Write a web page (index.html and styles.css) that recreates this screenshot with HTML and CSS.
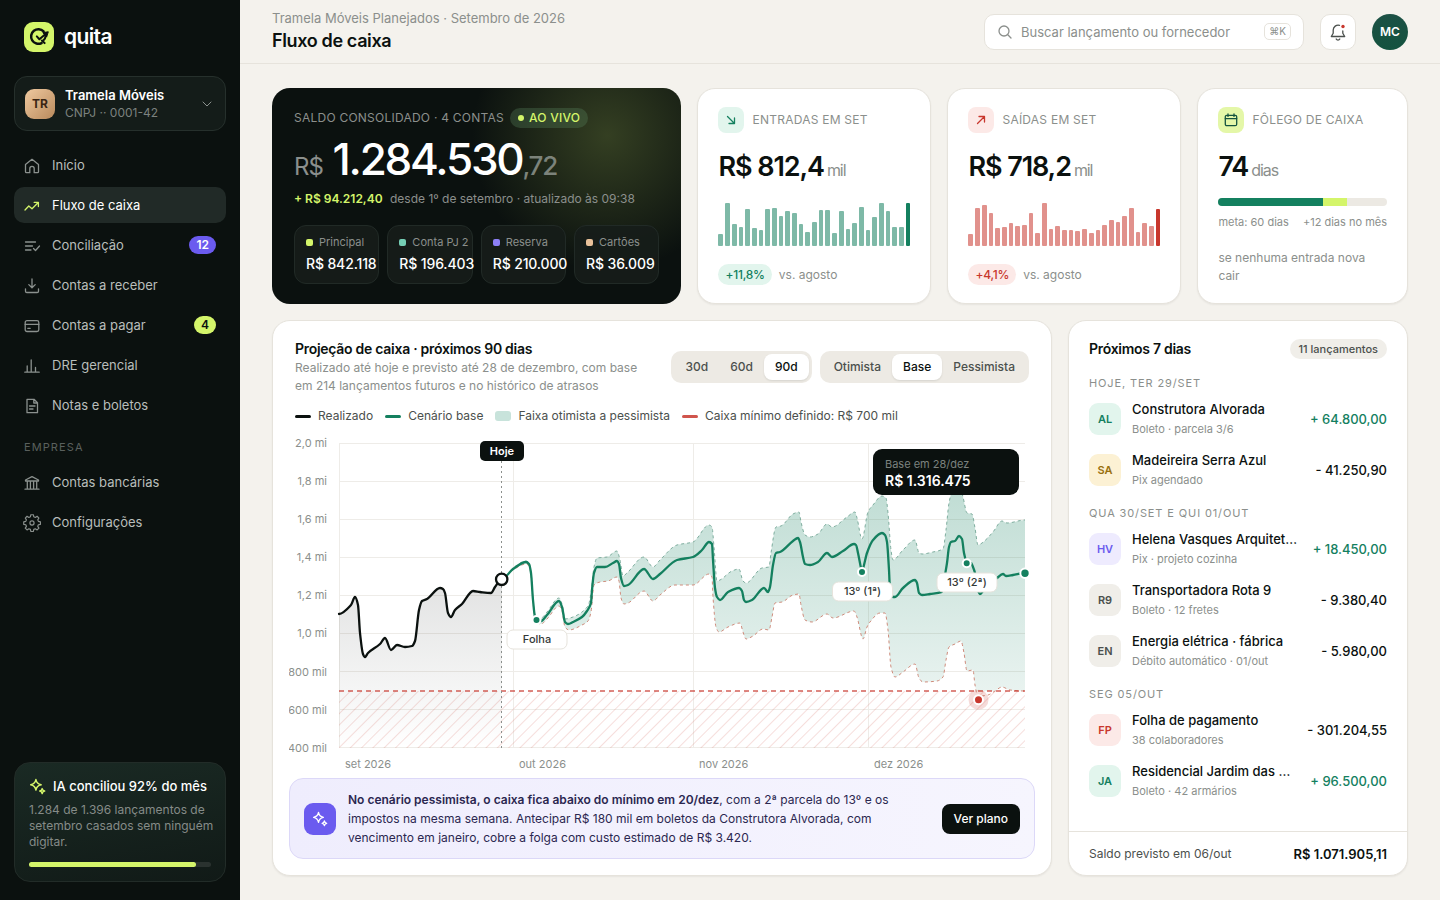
FILE: index.html
```html
<!DOCTYPE html>
<html lang="pt-BR">
<head>
  <meta charset="UTF-8" />
  <meta name="viewport" content="width=device-width, initial-scale=1" />
  <title>quita · Fluxo de caixa</title>
  <link rel="stylesheet" href="styles.css">
</head>
<body>

  <aside class="sidebar">
    <a class="brand" href="#">
      <svg class="brand-mark" viewBox="0 0 30 30" fill="none">
        <rect width="30" height="30" rx="9" fill="#d4f56a"/>
        <path d="M19.600 9.400A7.300 7.300 0 1 0 17.600 21.100" stroke="#0b110f" stroke-width="2.500" stroke-linecap="round"/>
        <path d="M12.800 14.400l2.600 2.800 5.600-4.700" stroke="#0b110f" stroke-width="2" stroke-linecap="round" stroke-linejoin="round"/>
        <path d="M18.800 10.600l5.500-.8-1.700 5.300z" fill="#0b110f" stroke="#0b110f" stroke-linejoin="round"/>
        <path d="M21.600 13.500c0 2.300-1 4-2.600 5.200M17.800 18.600l2.800 2.500" stroke="#0b110f" stroke-width="2" stroke-linecap="round"/>
      </svg>
      <span>quita</span>
    </a>

    <button class="org" type="button">
      <span class="org-badge">TR</span>
      <span class="org-text">
        <strong>Tramela Móveis</strong>
        <small>CNPJ ·· 0001-42</small>
      </span>
      <svg class="chevron" viewBox="0 0 12 12"><path d="M2 4l4 4 4-4"/></svg>
    </button>

    <nav class="nav">
      <a href="#">
        <svg viewBox="0 0 18 18"><path d="M2.500 7.600L9 2.300l6.500 5.300v7.100a1 1 0 0 1-1 1h-3.300v-4.200a2.200 2.200 0 0 0-4.400 0v4.200H3.500a1 1 0 0 1-1-1z"/></svg>
        <span>Início</span>
      </a>
      <a class="active" href="#">
        <svg viewBox="0 0 18 18"><path d="M2 13l3.800-4 3.200 2.800L15 5.800M11.200 5.400h4.200v4.200"/></svg>
        <span>Fluxo de caixa</span>
      </a>
      <a href="#">
        <svg viewBox="0 0 18 18"><path d="M2.500 5h10M2.500 9h7M2.500 13h5.500M10.500 11.500l2 2L16.500 9"/></svg>
        <span>Conciliação</span>
        <em class="count purple">12</em>
      </a>
      <a href="#">
        <svg viewBox="0 0 18 18"><path d="M9 2v8.500M5.800 7.600L9 10.800l3.200-3.200M2.500 11.800v2.400a1.300 1.300 0 0 0 1.300 1.300h10.400a1.300 1.300 0 0 0 1.300-1.300v-2.400"/></svg>
        <span>Contas a receber</span>
      </a>
      <a href="#">
        <svg viewBox="0 0 18 18"><rect x="2.200" y="3.700" width="13.600" height="10.800" rx="1.800"/><path d="M2.200 7.400h13.600M4.800 11.300h2.400"/></svg>
        <span>Contas a pagar</span>
        <em class="count lime">4</em>
      </a>
      <a href="#">
        <svg viewBox="0 0 18 18"><path d="M1.800 15.200h14.400M4.200 15V9M8.200 15V3M12.500 15v-4.500"/></svg>
        <span>DRE gerencial</span>
      </a>
      <a href="#">
        <svg viewBox="0 0 18 18"><path d="M4 2.300h7l3.500 3.500v9.900H4zM10.800 2.300v3.700h3.700M6.500 9h5.500M6.500 12h3.500"/></svg>
        <span>Notas e boletos</span>
      </a>
      <h2>Empresa</h2>
      <a href="#">
        <svg viewBox="0 0 18 18"><path d="M2.500 6L9 2.600 15.500 6v1h-13zM4.300 7.200v7M7.400 7.200v7M10.600 7.200v7M13.700 7.200v7M2 15.200h14"/></svg>
        <span>Contas bancárias</span>
      </a>
      <a href="#">
        <svg class="gear" viewBox="0 0 20 20"><circle cx="10" cy="10" r="2.300"/><path d="M8.600 1.700h2.800l.5 2.300 1.700.7 2-1.300 2 2-1.300 2 .7 1.700 2.300.5v2.800l-2.300.5-.7 1.700 1.300 2-2 2-2-1.300-1.700.7-.5 2.300H8.600l-.5-2.300-1.700-.7-2 1.300-2-2 1.300-2-.7-1.700-2.300-.5V9.600L3 9.100l.7-1.700-1.300-2 2-2 2 1.300 1.700-.7z" transform="translate(.1 -.9)"/></svg>
        <span>Configurações</span>
      </a>
    </nav>

    <div class="ai-card">
      <h3>
        <svg viewBox="0 0 16 16"><path d="M6.500 1.500c.6 3 1.900 4.300 4.900 4.900-3 .6-4.300 1.900-4.900 4.900-.6-3-1.900-4.300-4.900-4.900 3-.6 4.300-1.900 4.900-4.900zM12.400 10c.3 1.500.8 2 2.300 2.300-1.500.3-2 .8-2.300 2.300-.3-1.500-.8-2-2.300-2.300 1.500-.3 2-.8 2.300-2.300z"/></svg>
        IA conciliou 92% do mês
      </h3>
      <p>1.284 de 1.396 lançamentos de setembro casados sem ninguém digitar.</p>
      <div class="meter"><i style="width: 92%"></i></div>
    </div>
  </aside>

  <div class="page">
    <header class="topbar">
      <div class="titles">
        <p>Tramela Móveis Planejados · Setembro de 2026</p>
        <h1>Fluxo de caixa</h1>
      </div>
      <label class="search">
        <svg viewBox="0 0 16 16"><circle cx="7" cy="7" r="5"/><path d="M10.800 10.800L14 14"/></svg>
        <input type="search" placeholder="Buscar lançamento ou fornecedor" aria-label="Buscar lançamento ou fornecedor">
        <kbd>⌘K</kbd>
      </label>
      <button class="bell" type="button" aria-label="Notificações">
        <svg viewBox="0 0 18 18"><path d="M10.500 2.300A5 5 0 0 0 4.200 7v3.200L2.300 13.500h13.400l-1.900-3.300V8M7.200 16a2 2 0 0 0 3.600 0"/><circle cx="14" cy="3.500" r="1.700"/></svg>
      </button>
      <button class="avatar" type="button">MC</button>
    </header>

    <main class="content">
      <section class="kpis">
        <article class="hero">
          <div class="hero-label">Saldo consolidado · 4 contas <span class="live">Ao vivo</span></div>
          <div class="hero-value"><small>R$</small> 1.284.530<small class="cents">,72</small></div>
          <p class="hero-note"><b>+ R$ 94.212,40</b> desde 1º de setembro · atualizado às 09:38</p>
          <ul class="accounts">
            <li class="acc-lime"><span>Principal</span><b>R$ 842.118</b></li>
            <li class="acc-teal"><span>Conta PJ 2</span><b>R$ 196.403</b></li>
            <li class="acc-violet"><span>Reserva</span><b>R$ 210.000</b></li>
            <li class="acc-peach"><span>Cartões</span><b>R$ 36.009</b></li>
          </ul>
        </article>

        <article class="card kpi green">
          <header>
            <span class="kpi-icon"><svg viewBox="0 0 14 14"><path d="M3.500 3.500l7 7M10.500 5v5.500H5"/></svg></span>
            <h2>Entradas em set</h2>
          </header>
          <div class="kpi-value">R$ 812,4<small>mil</small></div>
          <div class="bars" data-bars="12,43,22,19,37,18,16,37,38,30,35,33,22,14,24,36,36,13,35,17,23,39,16,29,43,35,19,19,43"></div>
          <footer><span class="chip">+11,8%</span>vs. agosto</footer>
        </article>

        <article class="card kpi red">
          <header>
            <span class="kpi-icon"><svg viewBox="0 0 14 14"><path d="M3.500 10.500l7-7M5 3.500h5.500V9"/></svg></span>
            <h2>Saídas em set</h2>
          </header>
          <div class="kpi-value">R$ 718,2<small>mil</small></div>
          <div class="bars" data-bars="12,38,41,33,18,19,23,20,21,33,13,43,17,20,16,16,15,17,13,16,21,26,24,30,38,14,23,20,37"></div>
          <footer><span class="chip">+4,1%</span>vs. agosto</footer>
        </article>

        <article class="card kpi lime">
          <header>
            <span class="kpi-icon"><svg viewBox="0 0 14 14"><rect x="1.300" y="2.300" width="11.400" height="10.400" rx="1.500"/><path d="M1.300 5.600h11.400M4 1v2.400M10 1v2.400"/></svg></span>
            <h2>Fôlego de caixa</h2>
          </header>
          <div class="kpi-value">74<small>dias</small></div>
          <div class="runway"><i class="goal" style="width: 62%"></i><i class="extra" style="width: 14%"></i></div>
          <div class="runway-text"><span>meta: 60 dias</span><span>+12 dias no mês</span></div>
          <footer>se nenhuma entrada nova cair</footer>
        </article>
      </section>

      <section class="panels">
        <article class="card projection">
          <header class="proj-head">
            <div>
              <h2>Projeção de caixa · próximos 90 dias</h2>
              <p>Realizado até hoje e previsto até 28 de dezembro, com base em 214 lançamentos futuros e no histórico de atrasos</p>
            </div>
            <div class="segment">
              <button type="button">30d</button>
              <button type="button">60d</button>
              <button type="button" class="on">90d</button>
            </div>
            <div class="segment">
              <button type="button">Otimista</button>
              <button type="button" class="on">Base</button>
              <button type="button">Pessimista</button>
            </div>
          </header>

          <ul class="legend">
            <li><i class="line-ink"></i>Realizado</li>
            <li><i class="line-green"></i>Cenário base</li>
            <li><i class="area"></i>Faixa otimista a pessimista</li>
            <li><i class="line-red"></i>Caixa mínimo definido: R$ 700 mil</li>
          </ul>

          <svg class="chart" viewBox="289 429 746 349" role="img" aria-label="Projeção de caixa">
            <defs>
              <linearGradient id="band" x1="0" y1="0" x2="0" y2="1">
                <stop offset="0" stop-color="#14805f" stop-opacity=".27"/>
                <stop offset="1" stop-color="#14805f" stop-opacity=".09"/>
              </linearGradient>
              <linearGradient id="past" x1="0" y1="0" x2="0" y2="1">
                <stop offset="0" stop-color="#0b110f" stop-opacity=".12"/>
                <stop offset="1" stop-color="#0b110f" stop-opacity="0"/>
              </linearGradient>
              <pattern id="hatch" width="8" height="8" patternUnits="userSpaceOnUse" patternTransform="rotate(45)">
                <path d="M0 0v8" stroke="#c8372d" stroke-width="1.400" stroke-opacity=".24"/>
              </pattern>
              <clipPath id="above"><rect x="339" y="443" width="686" height="248"/></clipPath>
            </defs>

            <path class="grid" d="M339 443.500H1025M339 481.500H1025M339 519.500H1025M339 557.500H1025M339 595.500H1025M339 633.500H1025M339 671.500H1025M339 709.500H1025M339 747.500H1025M339.500 443V748M513.500 443V748M693.500 443V748M868.500 443V748"/>
            <g class="axis y-axis">
              <text x="327" y="447">2,0 mi</text>
              <text x="327" y="485">1,8 mi</text>
              <text x="327" y="523">1,6 mi</text>
              <text x="327" y="561">1,4 mi</text>
              <text x="327" y="599">1,2 mi</text>
              <text x="327" y="637">1,0 mi</text>
              <text x="327" y="676">800 mil</text>
              <text x="327" y="714">600 mil</text>
              <text x="327" y="752">400 mil</text>
            </g>
            <g class="axis">
              <text x="345" y="768">set 2026</text>
              <text x="519" y="768">out 2026</text>
              <text x="699" y="768">nov 2026</text>
              <text x="874" y="768">dez 2026</text>
            </g>

            <rect x="339" y="691" width="686" height="57" fill="url(#hatch)"/>
            <path id="past-area" fill="url(#past)"/>
            <path id="band-area" fill="url(#band)" clip-path="url(#above)"/>
            <path id="upper" class="dash upper"/>
            <path id="lower" class="dash lower"/>
            <path class="minimum" d="M339 691H1025"/>
            <path class="today" d="M501.500 461V748"/>
            <path id="base" class="serie base"/>
            <path id="real" class="serie real"/>

            <circle cx="501.700" cy="579.300" r="5.700" fill="#fff" stroke="#0b110f" stroke-width="2.300"/>
            <g class="dots">
              <circle cx="536.500" cy="620" r="4"/>
              <circle cx="862" cy="572" r="4"/>
              <circle cx="966.700" cy="563.300" r="4"/>
              <circle cx="1025" cy="573.300" r="4.700"/>
            </g>
            <circle cx="978.500" cy="699.700" r="10" fill="#c8372d" fill-opacity=".18"/>
            <circle class="alert-dot" cx="978.500" cy="699.700" r="4.500"/>

            <g class="tag">
              <rect x="507" y="630" width="60" height="19" rx="6"/>
              <text x="537" y="643">Folha</text>
              <rect x="832.500" y="582" width="60" height="19" rx="6"/>
              <text x="862.500" y="595">13º (1ª)</text>
              <rect x="937" y="573" width="60" height="19" rx="6"/>
              <text x="967" y="586">13º (2ª)</text>
            </g>
            <g class="tag-dark">
              <rect x="480" y="441" width="44" height="20" rx="5"/>
              <text x="502" y="455" text-anchor="middle">Hoje</text>
              <rect x="873" y="449" width="146" height="46" rx="9"/>
              <text class="tip-label" x="885" y="468">Base em 28/dez</text>
              <text class="tip-value" x="885" y="486">R$ 1.316.475</text>
            </g>
          </svg>

          <div class="advice">
            <span class="advice-icon">
              <svg viewBox="0 0 16 16"><path d="M6.500 1.500c.6 3 1.900 4.300 4.900 4.900-3 .6-4.300 1.900-4.900 4.900-.6-3-1.900-4.300-4.900-4.900 3-.6 4.300-1.900 4.900-4.900zM12.400 10c.3 1.500.8 2 2.300 2.300-1.500.3-2 .8-2.300 2.300-.3-1.500-.8-2-2.300-2.300 1.500-.3 2-.8 2.300-2.300z"/></svg>
            </span>
            <p><b>No cenário pessimista, o caixa fica abaixo do mínimo em 20/dez</b>, com a 2ª parcela do 13º e os impostos na mesma semana. Antecipar R$ 180 mil em boletos da Construtora Alvorada, com vencimento em janeiro, cobre a folga com custo estimado de R$ 3.420.</p>
            <button type="button">Ver plano</button>
          </div>
        </article>

        <article class="card upcoming">
          <header>
            <h2>Próximos 7 dias</h2>
            <span class="pill">11 lançamentos</span>
          </header>

          <h3>Hoje, ter 29/set</h3>
          <ul>
            <li><i class="tone-green">AL</i><div><b>Construtora Alvorada</b><small>Boleto · parcela 3/6</small></div><span class="in">+ 64.800,00</span></li>
            <li><i class="tone-yellow">SA</i><div><b>Madeireira Serra Azul</b><small>Pix agendado</small></div><span>- 41.250,90</span></li>
          </ul>
          <h3>Qua 30/set e qui 01/out</h3>
          <ul>
            <li><i class="tone-violet">HV</i><div><b>Helena Vasques Arquitetura</b><small>Pix · projeto cozinha</small></div><span class="in">+ 18.450,00</span></li>
            <li><i>R9</i><div><b>Transportadora Rota 9</b><small>Boleto · 12 fretes</small></div><span>- 9.380,40</span></li>
            <li><i>EN</i><div><b>Energia elétrica · fábrica</b><small>Débito automático · 01/out</small></div><span>- 5.980,00</span></li>
          </ul>
          <h3>Seg 05/out</h3>
          <ul>
            <li><i class="tone-red">FP</i><div><b>Folha de pagamento</b><small>38 colaboradores</small></div><span>- 301.204,55</span></li>
            <li><i class="tone-green">JA</i><div><b>Residencial Jardim das Acácias</b><small>Boleto · 42 armários</small></div><span class="in">+ 96.500,00</span></li>
          </ul>

          <footer><span>Saldo previsto em 06/out</span><b>R$ 1.071.905,11</b></footer>
        </article>
      </section>
    </main>
  </div>

  <script src="script.js"></script>
</body>
</html>
```
FILE: styles.css
```css
* {
  margin: 0;
  padding: 0;
  box-sizing: border-box;
}

:root {
  --ink: #0b110f;
  --text: #4b504d;
  --muted: #8b8f8c;
  --line: #e6e3dc;
  --green: #14805f;
  --lime: #d4f56a;
  --red: #c8372d;
  --violet: #6b5bef;
}

body {
  display: flex;
  min-height: 100vh;
  font-family: Inter, "Liberation Sans", sans-serif;
  font-size: 13px;
  line-height: 18px;
  color: var(--ink);
  background: #f4f2ed;
}

button,
input {
  font: inherit;
  color: inherit;
  border: none;
  background: none;
}

button {
  cursor: pointer;
}

ul {
  list-style: none;
}

a {
  color: inherit;
  text-decoration: none;
}

svg {
  fill: none;
}

/* Sidebar */
.sidebar {
  flex: 0 0 240px;
  display: flex;
  flex-direction: column;
  padding: 22px 14px 18px;
  background: var(--ink);
  color: #b9bebb;
}

.brand {
  display: flex;
  align-items: center;
  gap: 10px;
  padding: 0 10px;
  font-size: 21px;
  font-weight: 600;
  letter-spacing: -0.03em;
  color: #fff;
}

.brand-mark {
  width: 30px;
  height: 30px;
}

.org {
  display: flex;
  align-items: center;
  gap: 10px;
  margin-top: 24px;
  padding: 9px 12px 9px 10px;
  text-align: left;
  border: 1px solid #26302c;
  border-radius: 13px;
  background: #141c19;
}

.org-badge {
  width: 30px;
  height: 30px;
  border-radius: 9px;
  background: linear-gradient(135deg, #efc9a0, #b98a5c);
  color: #3a2513;
  font-size: 12px;
  font-weight: 700;
  line-height: 30px;
  text-align: center;
}

.org-text {
  flex: 1;
}

.org-text strong,
.org-text small {
  display: block;
}

.org-text strong {
  font-size: 13px;
  font-weight: 600;
  color: #fff;
}

.org-text small {
  font-size: 12px;
  line-height: 17px;
  color: #7c827f;
}

.chevron {
  width: 12px;
  height: 12px;
  stroke: #8b918e;
  stroke-linecap: round;
}

.nav {
  display: flex;
  flex-direction: column;
  gap: 4px;
  margin-top: 16px;
}

.nav a {
  display: flex;
  align-items: center;
  gap: 11px;
  padding: 8px 10px 8px 9px;
  border-radius: 10px;
  font-size: 13px;
  line-height: 20px;
}

.nav svg {
  width: 18px;
  height: 18px;
  margin-bottom: -2px;
  stroke: #8b918e;
  stroke-width: 1.3;
  stroke-linecap: round;
  stroke-linejoin: round;
}

.nav a span {
  flex: 1;
}

.nav .active {
  background: #212a27;
  color: #fff;
}

.nav .active svg {
  stroke: var(--lime);
}

.nav h2 {
  margin: 12px 10px 5px;
  font-size: 11px;
  font-weight: 400;
  line-height: 16px;
  letter-spacing: 0.1em;
  text-transform: uppercase;
  color: #5a605d;
}

.count {
  padding: 0 7px;
  border-radius: 9px;
  font-size: 12px;
  font-style: normal;
  font-weight: 600;
  line-height: 18px;
}

.count.purple {
  background: var(--violet);
  color: #fff;
}

.count.lime {
  background: var(--lime);
  color: var(--ink);
}

.ai-card {
  margin-top: auto;
  padding: 14px;
  border: 1px solid #222c28;
  border-radius: 16px;
  background: linear-gradient(170deg, #1a2a24, #111a17);
}

.ai-card h3 {
  display: flex;
  align-items: center;
  gap: 7px;
  font-size: 13px;
  font-weight: 500;
  color: #fff;
}

.ai-card svg {
  width: 17px;
  height: 17px;
  stroke: var(--lime);
  stroke-width: 1.4;
  stroke-linejoin: round;
}

.ai-card p {
  margin: 7px -8px 12px 0;
  font-size: 12px;
  line-height: 16px;
  color: #858b88;
}

.meter {
  height: 5px;
  border-radius: 3px;
  background: #2a322f;
}

.meter i {
  display: block;
  height: 100%;
  border-radius: 3px;
  background: var(--lime);
}

/* Top bar */
.page {
  flex: 1;
  min-width: 0;
  display: flex;
  flex-direction: column;
}

.topbar {
  display: flex;
  align-items: center;
  gap: 16px;
  height: 64px;
  padding: 0 32px;
  border-bottom: 1px solid var(--line);
}

.titles {
  flex: 1;
}

.titles p {
  color: var(--muted);
}

.titles h1 {
  font-size: 18px;
  font-weight: 600;
  line-height: 28px;
  letter-spacing: -0.02em;
}

.search {
  display: flex;
  align-items: center;
  gap: 8px;
  width: 320px;
  height: 36px;
  padding: 0 12px;
  border: 1px solid var(--line);
  border-radius: 10px;
  background: #fff;
}

.search svg {
  width: 16px;
  height: 16px;
  stroke: var(--muted);
  stroke-width: 1.3;
  stroke-linecap: round;
}

.search input {
  flex: 1;
  min-width: 0;
  outline: none;
}

.search input::placeholder {
  color: var(--muted);
  opacity: 1;
}

.search kbd {
  padding: 0 4px;
  border: 1px solid var(--line);
  border-radius: 5px;
  font-family: inherit;
  font-size: 10px;
  line-height: 15px;
  color: var(--muted);
}

.bell {
  width: 36px;
  height: 36px;
  padding-top: 4px;
  border: 1px solid var(--line);
  border-radius: 10px;
  background: #fff;
}

.bell svg {
  width: 18px;
  height: 18px;
  stroke: var(--text);
  stroke-width: 1.3;
  stroke-linecap: round;
  stroke-linejoin: round;
}

.bell circle {
  fill: var(--red);
  stroke: none;
}

.avatar {
  width: 36px;
  height: 36px;
  border-radius: 50%;
  background: linear-gradient(#1c5145, #14533f);
  color: #fff;
  font-size: 12px;
  font-weight: 600;
}

/* KPI row */
.content {
  flex: 1;
  display: flex;
  flex-direction: column;
  gap: 16px;
  padding: 24px 32px;
}

.kpis {
  display: grid;
  grid-template-columns: 1.75fr 1fr 1fr 0.9fr;
  gap: 16px;
}

.card {
  border: 1px solid var(--line);
  border-radius: 18px;
  background: #fff;
  box-shadow: 0 1px 2px rgba(11, 17, 15, 0.06);
}

.hero {
  min-width: 0;
  padding: 20px 22px;
  border-radius: 18px;
  background: radial-gradient(circle at 82% 22%, #343f22, rgba(11, 17, 15, 0) 36%) var(--ink);
  color: #fff;
}

.hero-label {
  display: flex;
  align-items: center;
  gap: 6px;
  font-size: 12px;
  line-height: 20px;
  letter-spacing: 0.02em;
  text-transform: uppercase;
  white-space: nowrap;
  color: var(--muted);
}

.live {
  display: flex;
  align-items: center;
  gap: 5px;
  padding: 0 8px;
  border-radius: 10px;
  background: rgba(93, 139, 100, 0.3);
  color: var(--lime);
  font-weight: 500;
}

.live::before {
  content: "";
  width: 6px;
  height: 6px;
  border-radius: 50%;
  background: currentColor;
}

.hero-value {
  margin-top: 6px;
  font-size: 44px;
  font-weight: 500;
  line-height: 50px;
  letter-spacing: -0.05em;
  white-space: nowrap;
}

.hero-value small {
  font-size: 24px;
  font-weight: 400;
  line-height: 24px;
  letter-spacing: -0.04em;
  color: var(--muted);
}

.hero-value .cents {
  font-size: 26px;
  font-weight: 500;
  letter-spacing: -0.05em;
  color: #7c837b;
}

.hero-note {
  margin-top: 6px;
  font-size: 12px;
  white-space: nowrap;
  color: var(--muted);
}

.hero-note b {
  margin-right: 4px;
  font-weight: 600;
  color: var(--lime);
}

.accounts {
  display: grid;
  grid-template-columns: repeat(4, minmax(0, 1fr));
  gap: 8px;
  margin-top: 17px;
}

.accounts li {
  padding: 7px 11px 8px;
  border: 1px solid #212a26;
  border-radius: 12px;
  background: rgba(22, 29, 26, 0.9);
  white-space: nowrap;
}

.accounts span {
  display: flex;
  align-items: center;
  gap: 6px;
  font-size: 11px;
  color: var(--muted);
}

.accounts span::before {
  content: "";
  flex: none;
  width: 7px;
  height: 7px;
  border-radius: 2px;
  background: var(--dot);
}

.accounts b {
  display: block;
  margin-top: 2px;
  font-size: 14px;
  font-weight: 500;
  line-height: 22px;
  letter-spacing: -0.01em;
}

.acc-lime { --dot: #d4f56a; }
.acc-teal { --dot: #74cdb4; }
.acc-violet { --dot: #8c7ff5; }
.acc-peach { --dot: #e8c19a; }

.kpi {
  display: flex;
  flex-direction: column;
  padding: 18px 20px;
}

.kpi.green {
  --tone: #14805f;
  --tint: #e2f5ed;
}

.kpi.red {
  --tone: #c8372d;
  --tint: #fce9e7;
}

.kpi.lime {
  --tone: #14533f;
  --tint: #e4f7a8;
}

.kpi header {
  display: flex;
  align-items: center;
  gap: 8px;
}

.kpi-icon {
  display: grid;
  place-items: center;
  width: 26px;
  height: 26px;
  border-radius: 8px;
  background: var(--tint);
}

.kpi-icon svg {
  width: 14px;
  height: 14px;
  stroke: var(--tone);
  stroke-width: 1.3;
  stroke-linecap: round;
  stroke-linejoin: round;
}

.kpi h2 {
  font-size: 12px;
  font-weight: 400;
  letter-spacing: 0.02em;
  text-transform: uppercase;
  white-space: nowrap;
  color: var(--muted);
}

.kpi-value {
  margin-top: 16px;
  font-size: 27px;
  font-weight: 600;
  line-height: 36px;
  letter-spacing: -0.04em;
}

.kpi-value small {
  margin-left: 3px;
  font-size: 16px;
  font-weight: 400;
  line-height: 16px;
  color: var(--muted);
}

.bars {
  display: flex;
  align-items: flex-end;
  gap: 2px;
  height: 44px;
  margin-top: 17px;
}

.bars i {
  flex: 1;
  border-radius: 1px;
  background: var(--tone);
  opacity: 0.55;
}

.bars i:last-child {
  opacity: 1;
}

.kpi footer {
  display: flex;
  align-items: center;
  gap: 7px;
  margin-top: auto;
  font-size: 12px;
  color: var(--muted);
}

.chip {
  padding: 0 7px;
  border-radius: 11px;
  background: var(--tint);
  color: var(--tone);
  font-size: 12px;
  font-weight: 500;
  line-height: 21px;
  letter-spacing: -0.02em;
}

.runway {
  display: flex;
  height: 8px;
  margin-top: 13px;
  border-radius: 4px;
  overflow: hidden;
  background: #ece9e3;
}

.goal {
  background: var(--green);
}

.extra {
  background: var(--lime);
}

.runway-text {
  display: flex;
  justify-content: space-between;
  margin-top: 8px;
  font-size: 11px;
  line-height: 16px;
  white-space: nowrap;
  color: var(--muted);
}

/* Panels */
.panels {
  flex: 1;
  display: grid;
  grid-template-columns: minmax(0, 1fr) 340px;
  gap: 16px;
}

.panels h2 {
  font-size: 14px;
  font-weight: 600;
  line-height: 20px;
  letter-spacing: -0.02em;
}

.projection {
  padding: 18px 16px 16px;
}

.proj-head {
  display: flex;
  align-items: center;
  gap: 8px;
  padding: 0 6px;
}

.proj-head > div:first-child {
  flex: 1;
}

.proj-head p {
  max-width: 360px;
  font-size: 12px;
  color: var(--muted);
}

.segment {
  display: flex;
  padding: 3px;
  border-radius: 10px;
  background: #edeae4;
}

.segment button {
  padding: 0 11px;
  border-radius: 8px;
  font-size: 12px;
  font-weight: 500;
  line-height: 26px;
  color: var(--text);
}

.segment .on {
  background: #fff;
  color: var(--ink);
  box-shadow: 0 1px 2px rgba(11, 17, 15, 0.1);
}

.legend {
  display: flex;
  gap: 12px;
  margin-top: 12px;
  padding: 0 6px;
  font-size: 12px;
  color: var(--text);
}

.legend li {
  display: flex;
  align-items: center;
  gap: 7px;
}

.legend i {
  width: 16px;
  height: 3px;
  border-radius: 2px;
}

.line-ink { background: var(--ink); }
.line-green { background: var(--green); }
.line-red { background: var(--red); opacity: 0.85; }

.legend .area {
  height: 10px;
  border-radius: 3px;
  background: #c8e3db;
}

.chart {
  display: block;
  width: 100%;
  margin-top: 4px;
}

.grid {
  stroke: #eeece8;
}

.axis text {
  font-size: 11px;
  fill: var(--muted);
}

.y-axis text {
  text-anchor: end;
}

.serie {
  stroke-width: 2.3;
  stroke-linecap: round;
  stroke-linejoin: round;
}

.real { stroke: var(--ink); }
.base { stroke: var(--green); }

.dash {
  stroke-dasharray: 3 3;
}

.upper { stroke: #7fae9f; }
.lower { stroke: #cf8c7c; }

.minimum {
  stroke: var(--red);
  stroke-width: 1.5;
  stroke-dasharray: 5 4;
  opacity: 0.8;
}

.today {
  stroke: #8b8f8c;
  stroke-dasharray: 2 3;
}

.dots circle {
  fill: var(--green);
  stroke: #fff;
  stroke-width: 2;
}

.alert-dot {
  fill: var(--red);
  stroke: #fff;
  stroke-width: 2;
}

.tag rect {
  fill: #fff;
  stroke: #e6e3dc;
}

.tag text {
  font-size: 11px;
  font-weight: 500;
  text-anchor: middle;
  fill: #333836;
}

.tag-dark rect {
  fill: var(--ink);
}

.tag-dark text {
  font-size: 11px;
  font-weight: 600;
  fill: #fff;
}

.tag-dark .tip-label {
  font-weight: 400;
  fill: #7c827f;
}

.tag-dark .tip-value {
  font-size: 14px;
}

.advice {
  display: flex;
  align-items: center;
  gap: 12px;
  padding: 11px 14px;
  border: 1px solid #dcd8f8;
  border-radius: 14px;
  background: linear-gradient(90deg, #efedfd, #f6f5fe);
}

.advice-icon {
  flex: none;
  display: grid;
  place-items: center;
  width: 32px;
  height: 32px;
  border-radius: 9px;
  background: var(--violet);
}

.advice svg {
  width: 16px;
  height: 16px;
  stroke: #fff;
  stroke-width: 1.3;
  stroke-linejoin: round;
}

.advice p {
  flex: 1;
  font-size: 12px;
  line-height: 19px;
  color: #2b2750;
}

.advice b {
  font-weight: 600;
}

.advice button {
  padding: 0 12px;
  border-radius: 8px;
  background: var(--ink);
  color: #fff;
  font-size: 12px;
  font-weight: 500;
  line-height: 30px;
  white-space: nowrap;
}

.upcoming {
  display: flex;
  flex-direction: column;
  padding-top: 18px;
}

.upcoming header,
.upcoming footer {
  display: flex;
  align-items: center;
  justify-content: space-between;
  padding: 0 20px;
}

.pill {
  padding: 0 9px;
  border-radius: 10px;
  background: #f0eee9;
  font-size: 11px;
  font-weight: 500;
  line-height: 20px;
  color: var(--text);
}

.upcoming h3 {
  padding: 11px 20px 2px;
  font-size: 11px;
  font-weight: 400;
  line-height: 15px;
  letter-spacing: 0.08em;
  text-transform: uppercase;
  color: var(--muted);
}

.upcoming header + h3 {
  padding-top: 17px;
}

.upcoming li {
  display: flex;
  align-items: center;
  gap: 11px;
  height: 51px;
  padding: 0 20px;
}

.upcoming li i {
  flex: none;
  width: 32px;
  border-radius: 9px;
  background: #f0eee9;
  color: var(--text);
  font-size: 11px;
  font-style: normal;
  font-weight: 600;
  line-height: 32px;
  text-align: center;
}

.upcoming li .tone-green { background: #e2f5ed; color: var(--green); }
.upcoming li .tone-yellow { background: #fcf1d4; color: #99700f; }
.upcoming li .tone-violet { background: #eeebfe; color: var(--violet); }
.upcoming li .tone-red { background: #fce9e7; color: var(--red); }

.upcoming li div {
  flex: 1;
  min-width: 0;
}

.upcoming li b,
.upcoming li small {
  display: block;
}

.upcoming li b {
  overflow: hidden;
  text-overflow: ellipsis;
  white-space: nowrap;
  font-weight: 500;
  line-height: 20px;
}

.upcoming li small {
  font-size: 11px;
  line-height: 20px;
  color: var(--muted);
}

.upcoming li span {
  font-weight: 500;
  white-space: nowrap;
}

.upcoming li .in {
  color: var(--green);
}

.upcoming footer {
  margin-top: auto;
  height: 44px;
  border-top: 1px solid var(--line);
  font-size: 12px;
  color: var(--text);
}

.upcoming footer b {
  font-size: 13px;
  font-weight: 600;
  color: var(--ink);
}
```
FILE: script.js
```js
// Mini bar charts
document.querySelectorAll(".bars").forEach(box => {
  box.dataset.bars.split(",").forEach(h => {
    const bar = document.createElement("i");
    bar.style.height = h + "px";
    box.appendChild(bar);
  });
});

// Chart series, x and y in the units of the viewBox
const series = {
  real: "339,614 351,605 355,597 358,605 360,633 363,654 365,657 368,653 380,644 385,638 391,650 397,645 405,647 412,646 415,641 419,610 422,601 427,599 440,588 443,589 445,593 448,613 451,617 455,610 462,604 473,591 480,592 491,593 495,587 502,579",
  base: "502,579 513,569 526,562 529,564 531,573 533,600 535,617 537,620 541,621 547,615 559,601 562,607 565,622 568,624 573,622 582,617 587,611 591,603 592,590 594,573 597,567 605,567 613,563 617,561 619,564 621,578 624,586 628,585 644,569 653,579 660,574 677,560 693,557 702,550 709,542 712,544 713,560 715,588 717,597 720,600 728,592 739,588 742,591 744,600 746,602 752,600 764,588 768,592 770,587 773,565 776,553 780,552 793,541 798,538 800,542 803,557 805,564 810,565 818,562 827,553 832,557 843,551 854,544 856,545 858,553 861,568 862,572 864,565 867,553 873,540 882,533 885,535 887,542 889,570 890,590 893,597 895,597 903,588 915,580 917,583 919,593 922,595 930,594 942,592 945,575 947,563 949,547 951,542 955,541 959,536 962,539 964,553 967,563 971,563 973,567 975,573 977,588 980,594 983,591 990,584 997,578 1003,574 1006,576 1013,575 1025,573",
  upper: "502,579 513,568 526,561 529,563 531,572 533,599 535,615 537,618 541,618 547,612 559,598 562,604 565,619 573,617 588,606 591,593 594,567 597,558 607,557 617,551 620,560 623,576 627,573 644,557 653,567 660,560 677,545 693,542 709,525 712,527 714,547 717,581 720,580 732,571 739,569 743,581 746,583 762,568 769,567 771,553 776,527 781,526 793,514 799,512 801,522 805,535 810,537 818,534 827,524 832,527 847,517 855,512 857,518 862,539 868,512 873,505 882,496 886,498 888,513 891,550 893,560 903,550 915,540 919,553 922,554 933,552 943,549 946,530 949,503 952,492 960,488 963,497 967,513 972,514 975,528 978,545 982,543 993,532 1002,521 1007,523 1025,520",
  lower: "502,579 513,570 526,564 529,566 531,575 533,602 535,618 537,623 541,624 547,619 559,606 562,611 565,627 569,630 582,625 588,621 591,612 594,585 600,582 608,581 617,577 619,581 621,598 624,604 628,603 644,591 653,601 660,595 675,585 693,585 709,574 712,577 713,597 716,627 719,632 728,627 740,623 743,632 746,639 753,636 763,629 769,630 772,617 775,603 782,602 793,595 799,594 801,605 805,620 812,622 827,614 833,618 854,611 857,617 863,639 867,627 870,622 880,613 885,613 888,630 891,667 895,677 903,672 915,664 919,678 923,682 937,681 943,677 946,660 949,647 955,644 961,641 964,653 967,671 973,670 975,685 978,697 982,696 988,695 995,691 1002,687 1010,690 1025,691"
};

// Monotone cubic curve through the points
function curve(points) {
  const slopes = points.map((p, i) => {
    if (i === 0 || i === points.length - 1) return 0;
    const a = (p[1] - points[i - 1][1]) / (p[0] - points[i - 1][0]);
    const b = (points[i + 1][1] - p[1]) / (points[i + 1][0] - p[0]);
    return a * b <= 0 ? 0 : 2 * a * b / (a + b);
  });

  let d = "";
  for (let i = 1; i < points.length; i++) {
    const [x0, y0] = points[i - 1];
    const [x1, y1] = points[i];
    const h = (x1 - x0) / 3;
    d += `C${x0 + h} ${y0 + slopes[i - 1] * h} ${x1 - h} ${y1 - slopes[i] * h} ${x1} ${y1}`;
  }
  return d;
}

const points = {};
for (const name in series) {
  points[name] = series[name].split(" ").map(p => p.split(",").map(Number));
  document.getElementById(name).setAttribute("d", "M" + points[name][0] + curve(points[name]));
}

document.getElementById("past-area").setAttribute("d",
  "M339,614" + curve(points.real) + "V748H339Z");

const back = points.lower.slice().reverse();
document.getElementById("band-area").setAttribute("d",
  "M" + points.upper[0] + curve(points.upper) + "L" + back[0] + curve(back) + "Z");
```
